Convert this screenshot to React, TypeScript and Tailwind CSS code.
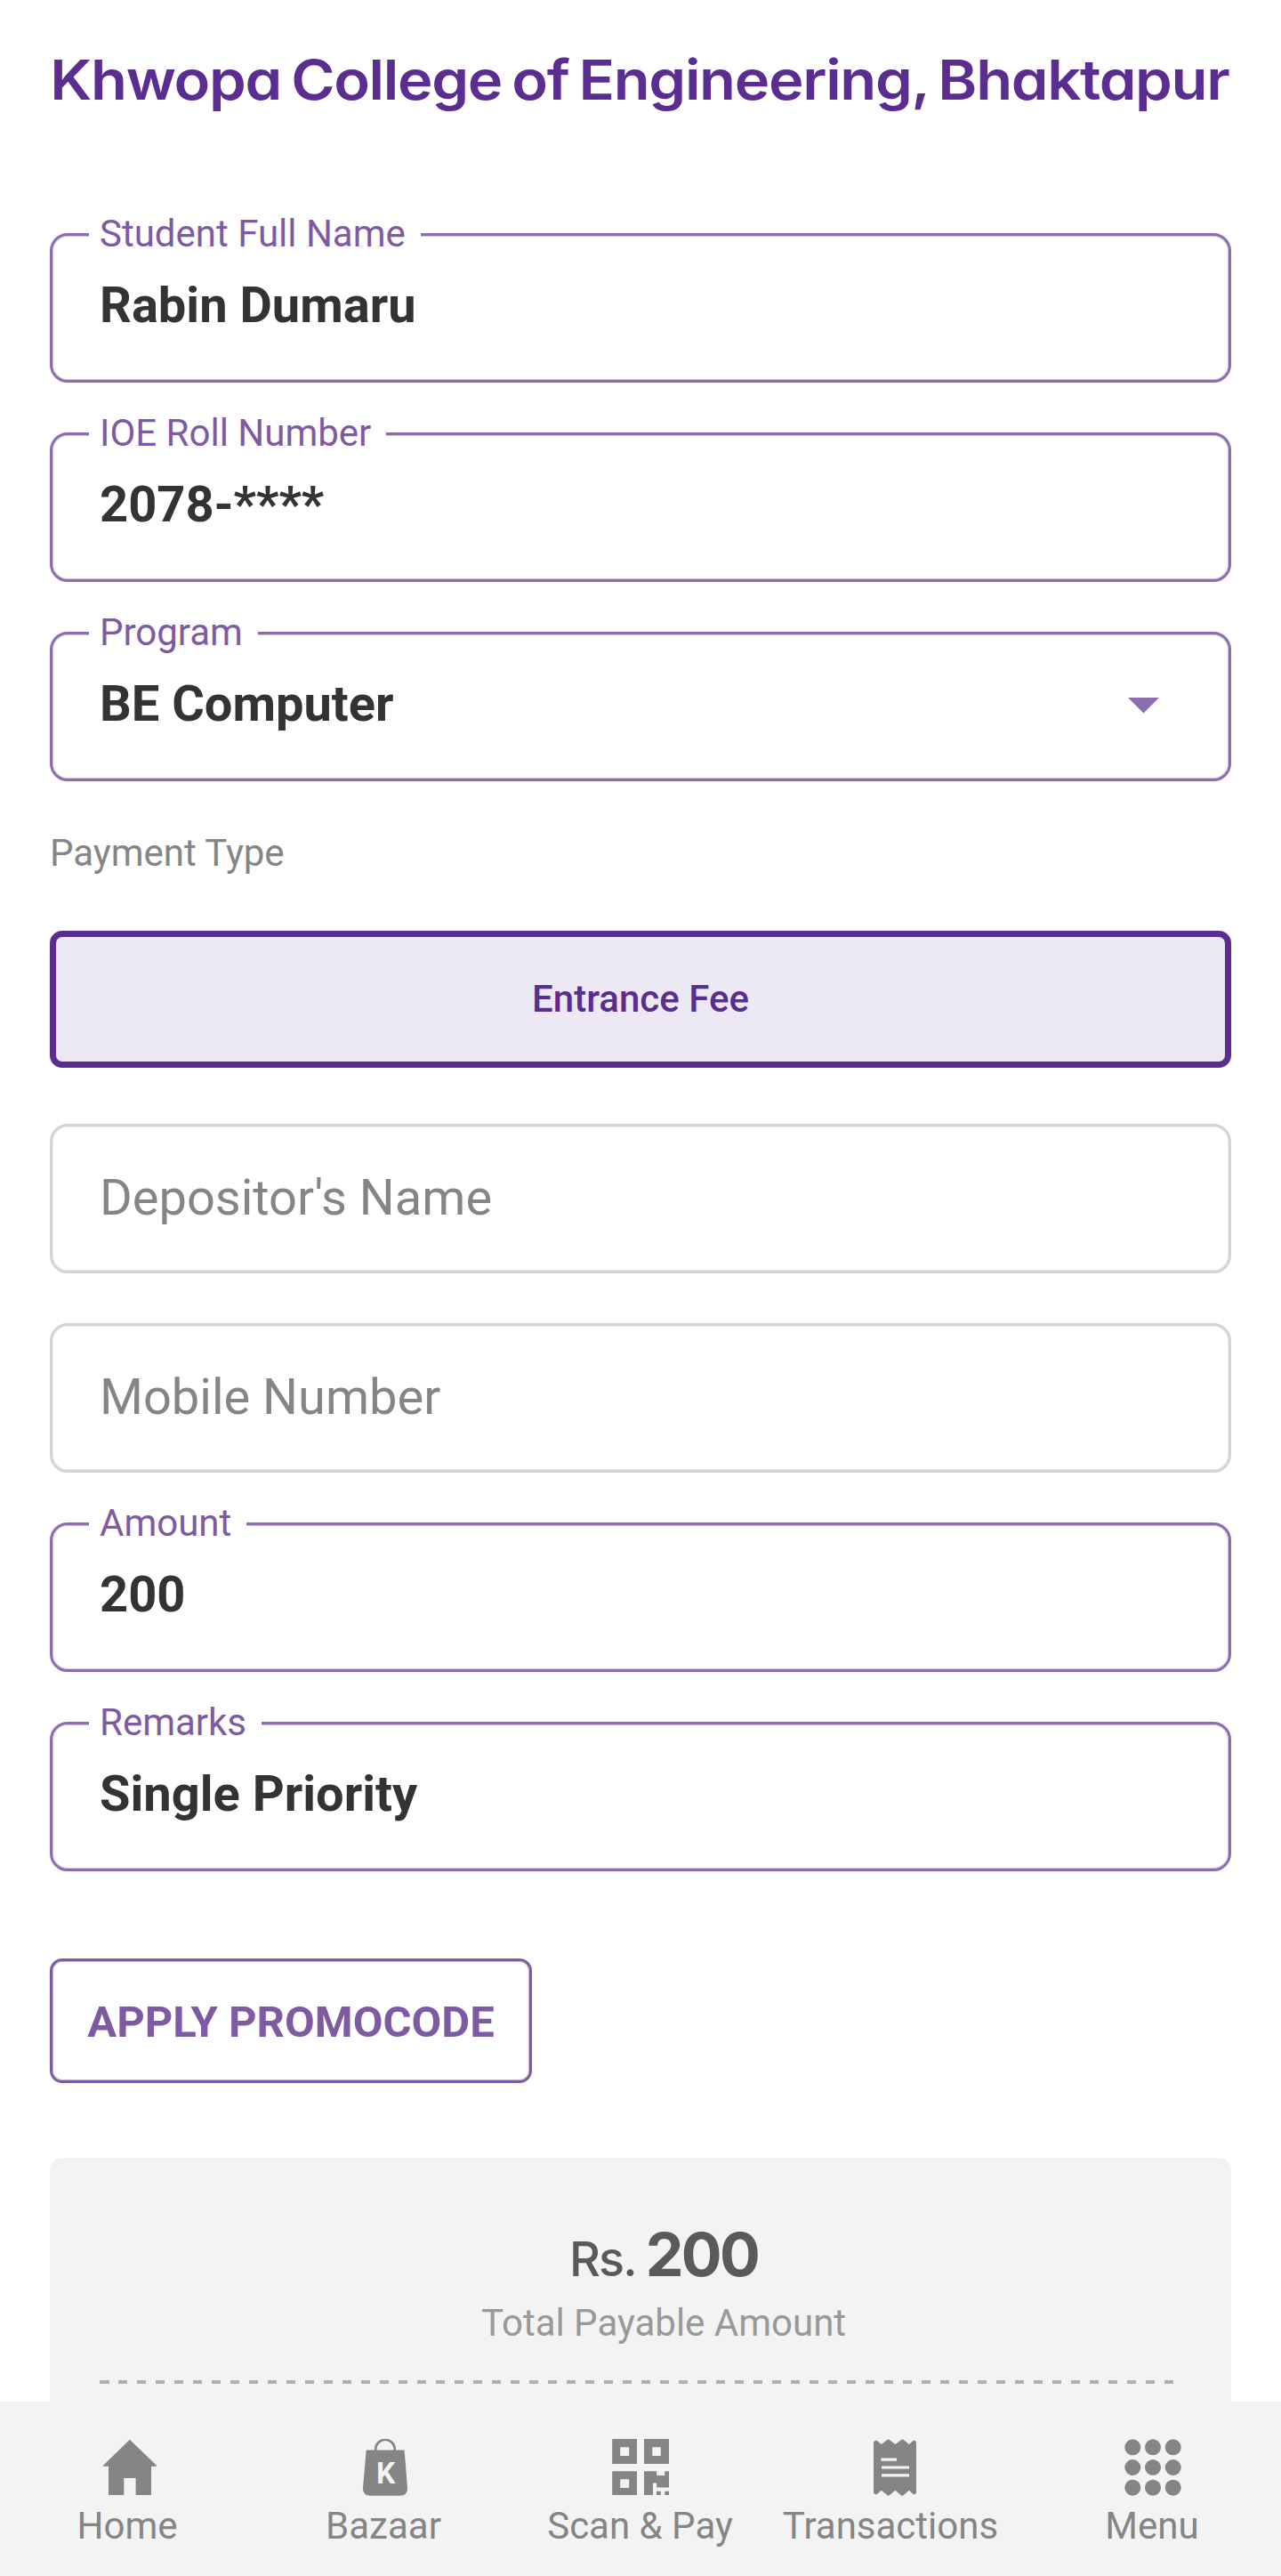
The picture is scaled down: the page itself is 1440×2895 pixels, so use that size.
import type { ReactNode } from "react";

type FieldProps = { label?: string; value?: string; placeholder?: string; caret?: boolean };

function Field({ label, value, placeholder, caret }: FieldProps) {
  const filled = Boolean(label);
  return (
    <div
      className={
        filled
          ? "relative flex h-[168px] w-full items-center justify-between rounded-[20px] border-3 border-[#8c6db0] pr-[78px] pl-[53px] inset-shadow-[0_0_0_1px_#cfc2de]"
          : "relative flex h-[168px] w-full items-center rounded-[20px] border-3 border-[#d3d3d3] px-[53px] inset-shadow-[0_0_0_1px_#ededed]"
      }
    >
      {filled && (
        <span className="absolute -top-[26px] left-[41px] bg-white pr-[17px] pl-[12px] text-[42px] leading-[48px] text-[#7e5aa3]">
          {label}
        </span>
      )}
      {filled ? (
        <span className="pb-[6px] text-[56px] leading-[64px] font-bold text-[#333333]">{value}</span>
      ) : (
        <span className="pb-[2px] text-[56px] leading-[64px] text-[#858585]">{placeholder}</span>
      )}
      {caret && (
        <svg className="mb-[2px]" width="35" height="18" viewBox="0 0 35 18" fill="#8c6db0">
          <path d="M0 0H35L17.5 17.5Z" />
        </svg>
      )}
    </div>
  );
}

function NavItem({ label, icon, className = "" }: { label: string; icon: ReactNode; className?: string }) {
  return (
    <div className={"flex flex-col items-center " + className}>
      {icon}
      <span className="mt-[10px] text-[42px] leading-[48px] whitespace-nowrap text-[#858585]">{label}</span>
    </div>
  );
}

const HomeIcon = (
  <svg className="ml-[6px]" width="64" height="64" viewBox="114 2741 64 64" fill="#858585">
    <path d="M145.8 2741.7L176 2770.8V2771.8H170V2804H152.6V2785H139.3V2804H122V2771.8H116V2770.8Z" />
  </svg>
);

const BagIcon = (
  <svg className="ml-[4px]" width="64" height="64" viewBox="401 2741 64 64">
    <path d="M422.2 2755v-2.4a10.8 10.8 0 0 1 21.6 0v2.4" fill="none" stroke="#858585" strokeWidth="2.6" />
    <path d="M412.6 2753.6H453.6Q454.6 2753.6 454.7 2754.6L458 2796.2Q458 2804.7 449.5 2804.7H416.5Q408 2804.7 408 2796.2L411.6 2754.6Q411.7 2753.6 412.6 2753.6Z" fill="#858585" />
    <text x="433.6" y="2791" textAnchor="middle" className="font-[Roboto,sans-serif] text-[33.5px] font-bold" fill="#f3f3f3">
      K
    </text>
  </svg>
);

const QrIcon = (
  <svg className="ml-[1px]" width="64" height="64" viewBox="688 2741 64 64" fill="#858585">
    <path
      fillRule="evenodd"
      d="M688.2 2741H716V2769H688.2ZM697.2 2750.2V2760H707.2V2750.2ZM724 2741H752V2769H724ZM733.3 2750.2V2760H742.8V2750.2ZM688.2 2777.2H716V2804H688.2ZM697.2 2786.3V2796H707.2V2786.3Z"
    />
    <path d="M724 2777.2H738.2V2782H747.3V2777.2H752V2795.6H738.2V2790.4H734V2804H724ZM738 2799.8H742.8V2804H738ZM747.3 2799.8H752V2804H747.3Z" />
  </svg>
);

const ReceiptIcon = (
  <svg className="ml-[10px]" width="64" height="64" viewBox="974 2741 64 64">
    <path
      d="M982 2744.5Q983.5 2742 986 2743L990.7 2747L998 2741.4H999.2L1006.4 2747L1013.7 2741.4H1015L1022 2747L1026.5 2743Q1029 2742 1030 2744.5V2801.5Q1029 2804 1026.5 2803L1022 2798.8L1015 2804.7H1013.5L1006.4 2798.8L999.2 2804.7H998L990.7 2798.8L986 2803Q983.5 2804 982 2801.5Z"
      fill="#858585"
    />
    <path d="M990.4 2764.2H1007.9M991 2773H1022M991 2781.8H1022" fill="none" stroke="#f3f3f3" strokeWidth="3.2" />
  </svg>
);

const MenuIcon = (
  <svg className="ml-[2px]" width="64" height="64" viewBox="-32 -32 64 64" fill="#858585">
    {[-22.7, 0, 22.7].map((y) =>
      [-22.7, 0, 22.7].map((x) => <circle key={`${x},${y}`} cx={x} cy={y} r="9" />),
    )}
  </svg>
);

export default function App() {
  return (
    <div className="flex h-[2895px] w-[1440px] flex-col overflow-hidden bg-white font-[Roboto,sans-serif]">
      <main className="flex min-h-0 flex-1 flex-col overflow-hidden px-14">
        <h1 className="mt-[50px] flex h-[80px] scale-x-[1.08] justify-center pr-[2px] font-[Inter,sans-serif] text-[62px] leading-[80px] font-semibold tracking-[-0.02em] whitespace-nowrap text-[#5b2d90] [font-feature-settings:'cv11'] [word-spacing:-4px]">
          Khwopa College of Engineering, Bhaktapur
        </h1>

        <div className="mt-[132px] flex shrink-0 flex-col gap-14">
          <Field label="Student Full Name" value="Rabin Dumaru" />
          <Field label="IOE Roll Number" value="2078-****" />
          <Field label="Program" value="BE Computer" caret />
        </div>

        <p className="mt-[57px] shrink-0 text-[42px] leading-[48px] text-[#858585]">Payment Type</p>

        <button className="mt-[63px] h-[154px] w-full shrink-0 rounded-[14px] border-7 border-[#5b2d90] bg-[#ede9f4] text-[42px] leading-[48px] font-medium text-[#5b2d90]">
          Entrance Fee
        </button>

        <div className="mt-[63px] flex shrink-0 flex-col gap-14">
          <Field placeholder="Depositor's Name" />
          <Field placeholder="Mobile Number" />
          <Field label="Amount" value="200" />
          <Field label="Remarks" value="Single Priority" />
        </div>

        <button className="mt-[98px] h-[140px] w-[542px] shrink-0 rounded-[14px] border-3 border-[#7e5aa3] pt-[3px] text-[49px] leading-[56px] font-bold whitespace-nowrap text-[#7e5aa3] inset-shadow-[0_0_0_1px_#c5b4d6]">
          APPLY PROMOCODE
        </button>

        <section className="mt-[84px] flex h-[400px] shrink-0 flex-col rounded-[14px] bg-[#f3f3f3] px-14 pt-[68px]">
          <p className="flex h-[80px] items-baseline justify-center gap-[11px] pl-[52px] font-[Inter,sans-serif] leading-[80px] text-[#5a5a5a]">
            <span className="text-[54px] font-medium tracking-[-0.035em]">Rs.</span>
            <span className="text-[68px] font-bold tracking-[-0.04em]">200</span>
          </p>
          <p className="mt-[14px] pl-[52px] text-center text-[42px] leading-[48px] text-[#999999]">Total Payable Amount</p>
          <div className="mt-[40px] h-[4px] w-[1208px] bg-[repeating-linear-gradient(90deg,#b0b0b0_0_10.5px,transparent_10.5px_21px)]" />
        </section>
      </main>

      <nav className="grid h-[196px] shrink-0 grid-cols-5 bg-[#f3f3f3] pt-[42px]">
        <NavItem label="Home" icon={HomeIcon} className="pr-[2px]" />
        <NavItem label="Bazaar" icon={BagIcon} className="pr-[2px]" />
        <NavItem label="Scan & Pay" icon={QrIcon} className="pr-[1px]" />
        <NavItem label="Transactions" icon={ReceiptIcon} className="pr-[14px]" />
        <NavItem label="Menu" icon={MenuIcon} className="pr-[2px]" />
      </nav>
    </div>
  );
}
